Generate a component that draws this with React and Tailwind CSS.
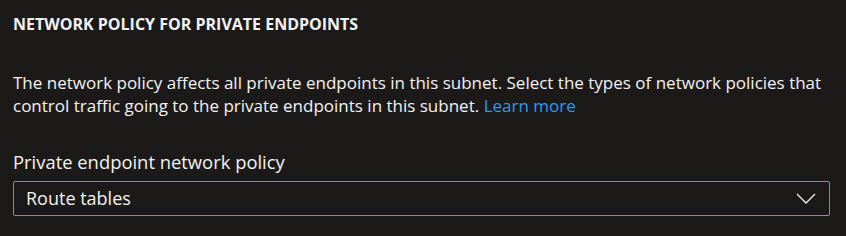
export default function App() {
  return (
    <div className="min-h-screen w-full bg-[#1b1a19] text-[#f3f2f1] px-[13px] pt-[14px] font-['Open_Sans',sans-serif]">
      <h2 className="text-[16px] font-bold leading-[20px]">NETWORK POLICY FOR PRIVATE ENDPOINTS</h2>
      <p className="mt-[37px] text-[17px] leading-[23px]">
        The network policy affects all private endpoints in this subnet. Select the types of network policies that
        <br />
        control traffic going to the private endpoints in this subnet.{' '}
        <a href="#" className="text-[#2b9af3]">Learn more</a>
      </p>
      <label className="block mt-[34px] text-[18.4px] leading-[22px]">Private endpoint network policy</label>
      <div className="mt-[8px] flex h-[35px] w-[817px] items-center justify-between rounded-[2px] border border-[#c95ee6] pl-[12px] pr-[13px]">
        <span className="text-[18px]">Route tables</span>
        <svg width="20" height="11" viewBox="0 0 20 11" fill="none">
          <path d="M1 1l9 9 9-9" stroke="#f3f2f1" strokeWidth="1.3" />
        </svg>
      </div>
    </div>
  );
}
